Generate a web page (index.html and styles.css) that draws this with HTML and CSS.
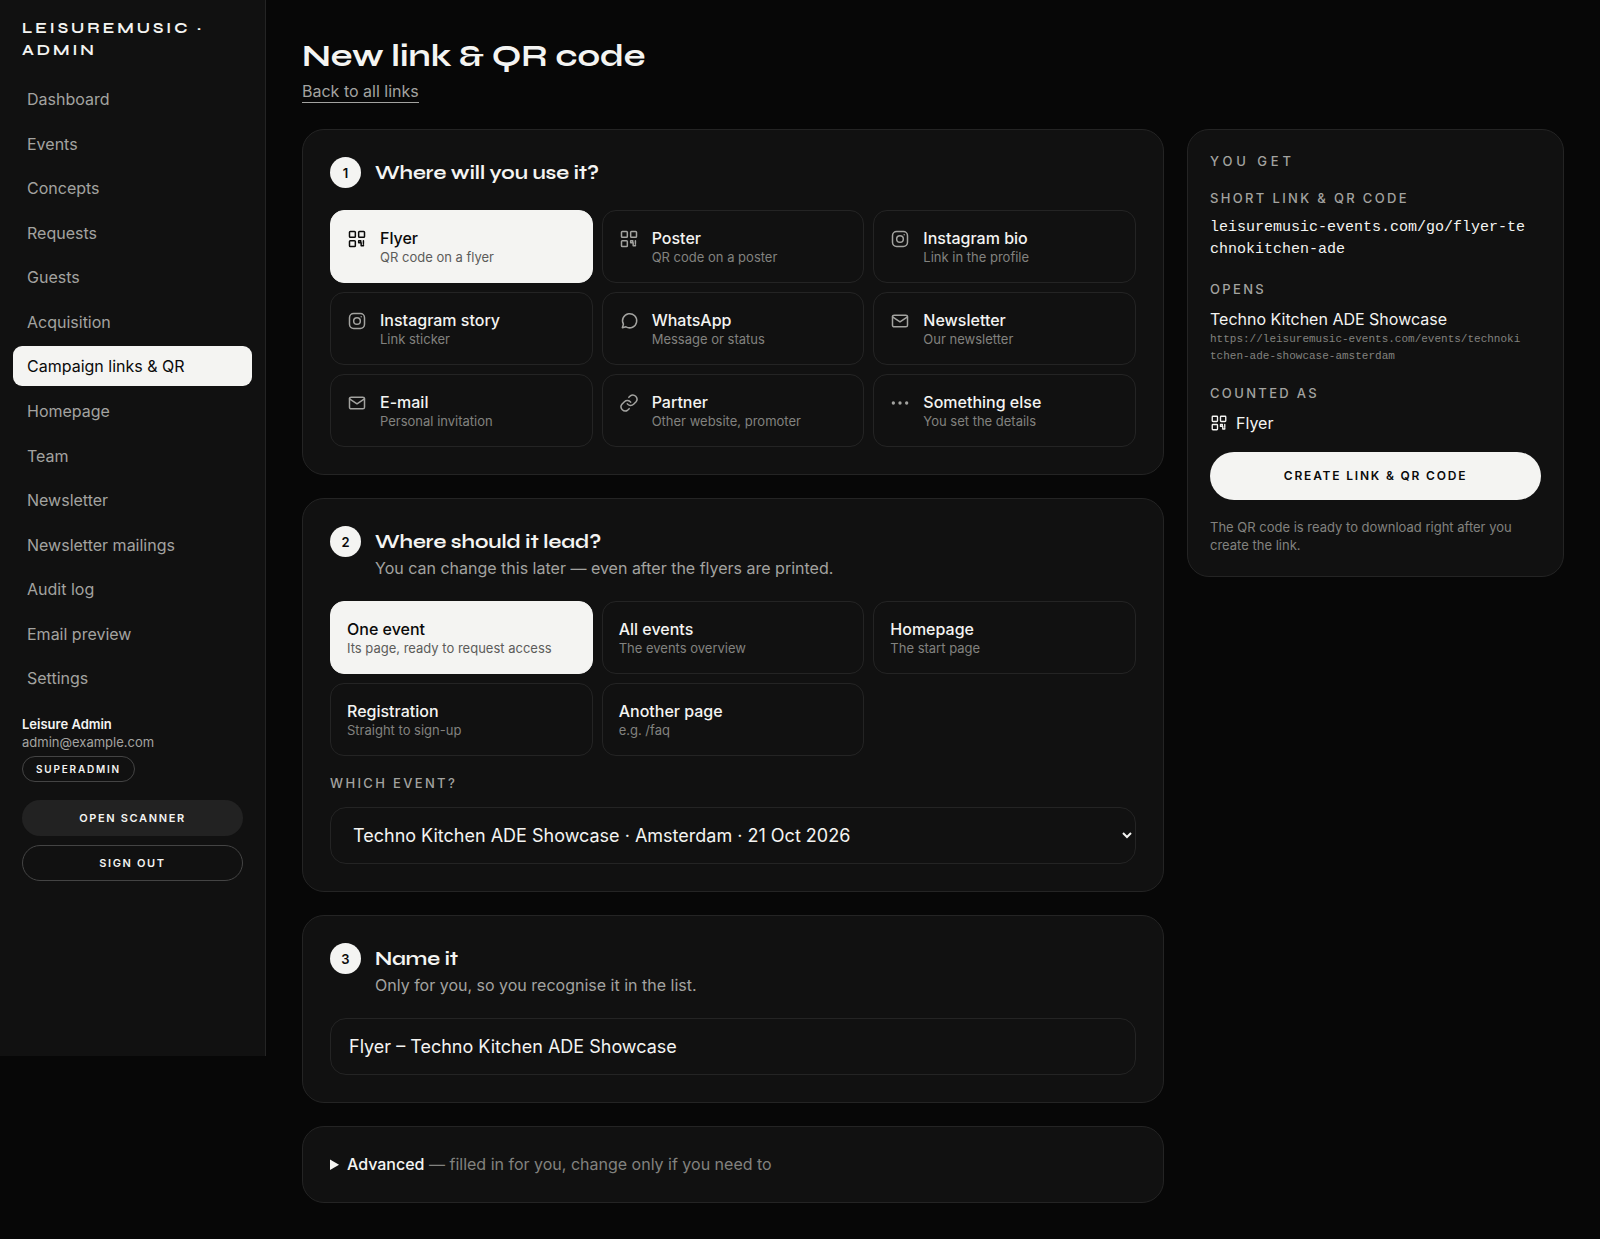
FILE: index.html
```
<!DOCTYPE html>
<html lang="en">
<head>
    <meta charset="UTF-8">
    <meta name="viewport" content="width=device-width, initial-scale=1.0">
    <title>New link &amp; QR code</title>
    <link rel="stylesheet" href="styles.css">
</head>
<body>

    <!-- Shared icons -->
    <svg class="sprite" aria-hidden="true">
        <symbol id="icon-qr" viewBox="0 0 24 24">
            <rect x="3" y="3" width="7" height="7" rx="1"/>
            <rect x="14" y="3" width="7" height="7" rx="1"/>
            <rect x="3" y="14" width="7" height="7" rx="1"/>
            <path d="M14 14h2.500v2.500h-2.500zM19.700 14v3.500M17 16.500v3.500h2.700v-1"/>
        </symbol>
        <symbol id="icon-instagram" viewBox="0 0 24 24">
            <rect x="3" y="3" width="18" height="18" rx="5"/>
            <circle cx="12" cy="12" r="4"/>
            <path d="M17 7h.01"/>
        </symbol>
        <symbol id="icon-chat" viewBox="0 0 24 24">
            <path d="M4 20l1.300-4.200A8.500 8.500 0 1 1 8.400 19z"/>
        </symbol>
        <symbol id="icon-mail" viewBox="0 0 24 24">
            <rect x="3" y="5" width="18" height="14" rx="2"/>
            <path d="M3 7l9 6 9-6"/>
        </symbol>
        <symbol id="icon-link" viewBox="0 0 24 24">
            <path d="M10 13a5 5 0 0 0 7.500.5l3-3a5 5 0 0 0-7-7l-1.700 1.700"/>
            <path d="M14 11a5 5 0 0 0-7.500-.5l-3 3a5 5 0 0 0 7 7l1.700-1.700"/>
        </symbol>
        <symbol id="icon-dots" viewBox="0 0 24 24">
            <circle class="dot" cx="4" cy="12" r="2"/>
            <circle class="dot" cx="12" cy="12" r="2"/>
            <circle class="dot" cx="20" cy="12" r="2"/>
        </symbol>
    </svg>

    <div class="layout">
        <aside class="sidebar">
            <div class="brand">Leisuremusic · Admin</div>

            <nav class="nav">
                <a href="#">Dashboard</a>
                <a href="#">Events</a>
                <a href="#">Concepts</a>
                <a href="#">Requests</a>
                <a href="#">Guests</a>
                <a href="#">Acquisition</a>
                <a href="#" class="active" aria-current="page">Campaign links &amp; QR</a>
                <a href="#">Homepage</a>
                <a href="#">Team</a>
                <a href="#">Newsletter</a>
                <a href="#">Newsletter mailings</a>
                <a href="#">Audit log</a>
                <a href="#">Email preview</a>
                <a href="#">Settings</a>
            </nav>

            <div class="account">
                <div class="account-name">Leisure Admin</div>
                <div class="account-email">admin@example.com</div>
                <span class="badge">Superadmin</span>
                <div class="account-actions">
                    <button type="button" class="btn btn-dark">Open scanner</button>
                    <button type="button" class="btn btn-outline">Sign out</button>
                </div>
            </div>
        </aside>

        <main class="main">
            <h1>New link &amp; QR code</h1>
            <a href="#" class="back-link">Back to all links</a>

            <form class="columns">
                <div class="steps">
                    <section class="card">
                        <div class="step-head">
                            <span class="step-number">1</span>
                            <h2>Where will you use it?</h2>
                        </div>
                        <div class="options">
                            <button type="button" class="option selected" aria-pressed="true">
                                <svg class="icon"><use href="#icon-qr"/></svg>
                                <span><strong>Flyer</strong><small>QR code on a flyer</small></span>
                            </button>
                            <button type="button" class="option">
                                <svg class="icon"><use href="#icon-qr"/></svg>
                                <span><strong>Poster</strong><small>QR code on a poster</small></span>
                            </button>
                            <button type="button" class="option">
                                <svg class="icon"><use href="#icon-instagram"/></svg>
                                <span><strong>Instagram bio</strong><small>Link in the profile</small></span>
                            </button>
                            <button type="button" class="option">
                                <svg class="icon"><use href="#icon-instagram"/></svg>
                                <span><strong>Instagram story</strong><small>Link sticker</small></span>
                            </button>
                            <button type="button" class="option">
                                <svg class="icon"><use href="#icon-chat"/></svg>
                                <span><strong>WhatsApp</strong><small>Message or status</small></span>
                            </button>
                            <button type="button" class="option">
                                <svg class="icon"><use href="#icon-mail"/></svg>
                                <span><strong>Newsletter</strong><small>Our newsletter</small></span>
                            </button>
                            <button type="button" class="option">
                                <svg class="icon"><use href="#icon-mail"/></svg>
                                <span><strong>E-mail</strong><small>Personal invitation</small></span>
                            </button>
                            <button type="button" class="option">
                                <svg class="icon"><use href="#icon-link"/></svg>
                                <span><strong>Partner</strong><small>Other website, promoter</small></span>
                            </button>
                            <button type="button" class="option">
                                <svg class="icon"><use href="#icon-dots"/></svg>
                                <span><strong>Something else</strong><small>You set the details</small></span>
                            </button>
                        </div>
                    </section>

                    <section class="card">
                        <div class="step-head">
                            <span class="step-number">2</span>
                            <div>
                                <h2>Where should it lead?</h2>
                                <p>You can change this later — even after the flyers are printed.</p>
                            </div>
                        </div>
                        <div class="options">
                            <button type="button" class="option selected" aria-pressed="true">
                                <span><strong>One event</strong><small>Its page, ready to request access</small></span>
                            </button>
                            <button type="button" class="option">
                                <span><strong>All events</strong><small>The events overview</small></span>
                            </button>
                            <button type="button" class="option">
                                <span><strong>Homepage</strong><small>The start page</small></span>
                            </button>
                            <button type="button" class="option">
                                <span><strong>Registration</strong><small>Straight to sign-up</small></span>
                            </button>
                            <button type="button" class="option">
                                <span><strong>Another page</strong><small>e.g. /faq</small></span>
                            </button>
                        </div>
                        <label class="label field-label" for="event">Which event?</label>
                        <select class="field" id="event">
                            <option>Techno Kitchen ADE Showcase · Amsterdam · 21 Oct 2026</option>
                        </select>
                    </section>

                    <section class="card">
                        <div class="step-head">
                            <span class="step-number">3</span>
                            <div>
                                <h2><label for="name">Name it</label></h2>
                                <p>Only for you, so you recognise it in the list.</p>
                            </div>
                        </div>
                        <input class="field" type="text" id="name" value="Flyer – Techno Kitchen ADE Showcase">
                    </section>

                    <details class="card">
                        <summary><strong>Advanced</strong> — filled in for you, change only if you need to</summary>
                    </details>
                </div>

                <aside class="card summary">
                    <h2 class="label label-wide">You get</h2>

                    <h3 class="label">Short link &amp; QR code</h3>
                    <p class="short-link">leisuremusic-events.com/go/flyer-technokitchen-ade</p>

                    <h3 class="label">Opens</h3>
                    <p class="value">Techno Kitchen ADE Showcase</p>
                    <p class="long-link">https://leisuremusic-events.com/events/technokitchen-ade-showcase-amsterdam</p>

                    <h3 class="label">Counted as</h3>
                    <p class="value counted"><svg class="icon icon-small"><use href="#icon-qr"/></svg>Flyer</p>

                    <button type="submit" class="btn btn-primary">Create link &amp; QR code</button>
                    <p class="note">The QR code is ready to download right after you create the link.</p>
                </aside>
            </form>
        </main>
    </div>

</body>
</html>
```
FILE: styles.css
```
* {
    box-sizing: border-box;
}
body {
    margin: 0;
    background: #070707;
    color: #f4f4f2;
    font-family: Inter, sans-serif;
    font-size: 16px;
    line-height: 22px;
}
h1, h2, h3, p {
    margin: 0;
}
a {
    color: inherit;
    text-decoration: none;
}
button, input, select {
    font: inherit;
    color: inherit;
}
.sprite {
    display: none;
}
.layout {
    display: flex;
    align-items: flex-start;
}

/* Sidebar */
.sidebar {
    flex: 0 0 266px;
    min-height: calc(100vh - 183px);
    padding: 17px 13px;
    background: #111;
    border-right: 1px solid #242424;
}
.brand {
    padding: 0 9px;
    font-family: Syne, "DejaVu Sans", sans-serif;
    font-size: 15px;
    font-weight: 700;
    letter-spacing: 0.2em;
    text-transform: uppercase;
}
.nav {
    display: flex;
    flex-direction: column;
    justify-content: space-between;
    min-height: 50vh;
    margin: 18px 0 16px;
}
.nav a {
    padding: 9px 14px;
    border-radius: 9px;
    color: #a3a3a0;
}
.nav a.active {
    background: #f4f4f2;
    color: #0a0a0a;
}
.account {
    padding: 0 9px;
    font-size: 13px;
    line-height: 18px;
}
.account-name {
    font-weight: 600;
}
.account-email {
    color: #a3a3a0;
}
.badge {
    display: inline-block;
    margin-top: 5px;
    padding: 3px 13px;
    border: 1px solid #444;
    border-radius: 13px;
    font-size: 10px;
    font-weight: 600;
    letter-spacing: 0.18em;
    text-transform: uppercase;
}
.account-actions {
    display: flex;
    flex-direction: column;
    gap: 9px;
    margin-top: 18px;
}
.btn {
    width: 100%;
    padding: 8px 16px;
    border: 1px solid transparent;
    border-radius: 25px;
    font-size: 11px;
    font-weight: 600;
    line-height: 18px;
    letter-spacing: 0.15em;
    text-transform: uppercase;
    cursor: pointer;
}
.btn-dark {
    background: #222;
}
.btn-outline {
    background: transparent;
    border-color: #444;
}
.btn-primary {
    margin: 18px 0;
    padding: 14px 16px;
    background: #f4f4f2;
    color: #0a0a0a;
    font-size: 12px;
}

/* Main */
.main {
    flex: 1;
    min-width: 0;
    padding: 36px;
}
h1 {
    font-family: Syne, "DejaVu Sans", sans-serif;
    font-size: 32px;
    font-weight: 700;
    line-height: 40px;
}
.back-link {
    display: inline-block;
    margin-top: 4px;
    border-bottom: 1px solid #a3a3a0;
    color: #a3a3a0;
}
.columns {
    display: grid;
    grid-template-columns: minmax(0, 1fr) 377px;
    align-items: start;
    gap: 23px;
    margin-top: 26px;
}
.steps {
    display: grid;
    gap: 23px;
}
.card {
    padding: 27px;
    background: #111;
    border: 1px solid #242424;
    border-radius: 22px;
}
.step-head {
    display: flex;
    gap: 14px;
    margin-bottom: 22px;
}
.step-number {
    display: flex;
    flex: none;
    align-items: center;
    justify-content: center;
    width: 31px;
    height: 31px;
    border-radius: 50%;
    background: #f4f4f2;
    color: #0a0a0a;
    font-size: 13px;
    font-weight: 600;
}
.step-head h2 {
    font-family: Syne, "DejaVu Sans", sans-serif;
    font-size: 19px;
    font-weight: 700;
    line-height: 31px;
}
.step-head p {
    color: #a3a3a0;
}
.options {
    display: grid;
    grid-template-columns: repeat(3, minmax(0, 1fr));
    gap: 9px;
}
.option {
    display: flex;
    align-items: flex-start;
    gap: 13px;
    padding: 16px;
    border: 1px solid #242424;
    border-radius: 14px;
    background: transparent;
    text-align: left;
    cursor: pointer;
}
.option strong, .option small {
    display: block;
}
.option strong {
    font-weight: 500;
}
.option small {
    color: #82827f;
    font-size: 13px;
    line-height: 17px;
}
.option.selected {
    background: #f4f4f2;
    border-color: #f4f4f2;
    color: #0a0a0a;
}
.option.selected small {
    color: #5c5c5a;
}
.icon {
    flex: none;
    width: 20px;
    height: 20px;
    margin-top: 2px;
    fill: none;
    stroke: #a3a3a0;
    stroke-width: 1.8;
    stroke-linecap: round;
    stroke-linejoin: round;
}
.icon-small {
    width: 18px;
    height: 18px;
    stroke: currentColor;
}
.option.selected .icon {
    stroke: currentColor;
}
.dot {
    fill: #a3a3a0;
    stroke: none;
}
.label {
    display: block;
    color: #a3a3a0;
    font-size: 13px;
    font-weight: 500;
    line-height: 18px;
    letter-spacing: 0.18em;
    text-transform: uppercase;
}
.label-wide {
    letter-spacing: 0.3em;
}
.field-label {
    margin: 18px 0 15px;
}
.field {
    width: 100%;
    height: 57px;
    padding: 0 18px;
    border: 1px solid #242424;
    border-radius: 16px;
    background: #111;
    font-size: 18px;
}
summary {
    color: #82827f;
    line-height: 21px;
    cursor: pointer;
}
summary::marker {
    color: #f4f4f2;
}
summary strong {
    color: #f4f4f2;
    font-weight: 500;
}

/* Right column */
.summary {
    padding: 22px;
}
.summary h3 {
    margin: 19px 0 10px;
}
.short-link {
    max-width: 35ch;
    font-family: "Liberation Mono", monospace;
    font-size: 15px;
    word-break: break-all;
}
.long-link {
    max-width: 47ch;
    margin-top: 1px;
    color: #82827f;
    font-family: "Liberation Mono", monospace;
    font-size: 11px;
    line-height: 17px;
    word-break: break-all;
}
.counted {
    display: flex;
    gap: 8px;
}
.note {
    color: #82827f;
    font-size: 13px;
    line-height: 18px;
}
```
